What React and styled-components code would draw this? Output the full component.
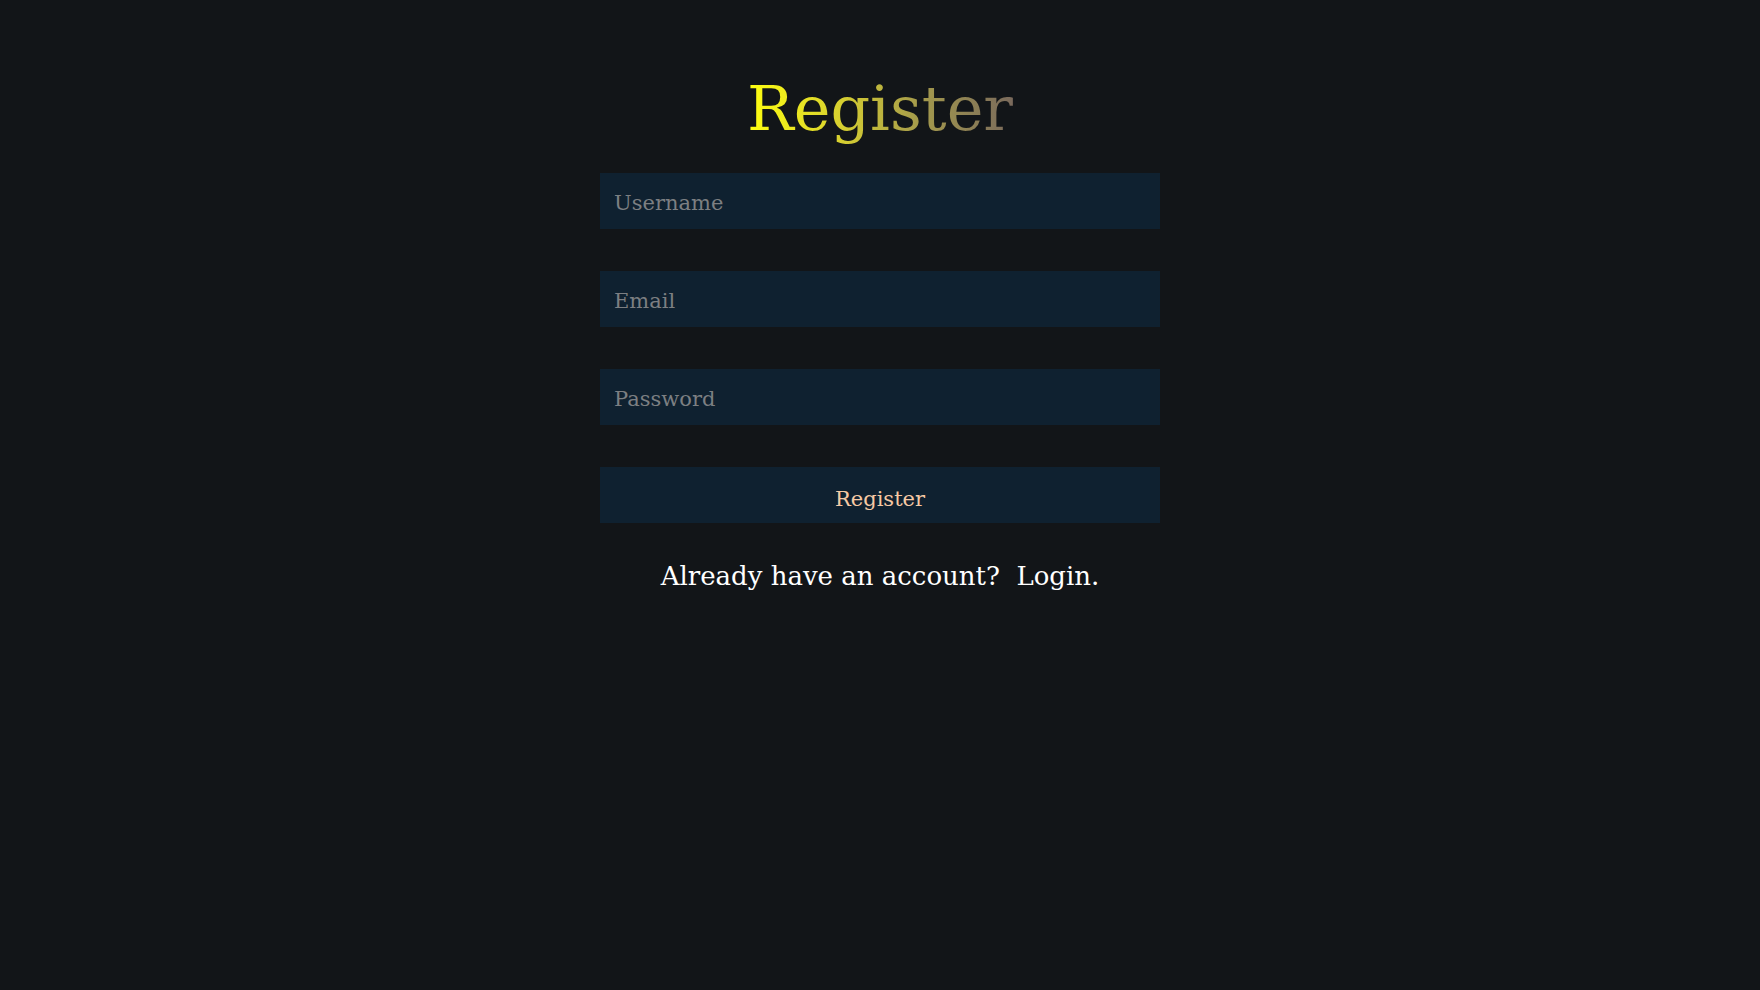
import React from "react";
import styled, { createGlobalStyle } from "styled-components";

const Global = createGlobalStyle`
  html, body { margin: 0; padding: 0; background: #121518; }
  body { font-family: "DejaVu Serif", "Liberation Serif", serif; }
  * { box-sizing: border-box; }
`;

const Page = styled.main`
  min-height: 990px;
  background: #121518;
  display: flex;
  flex-direction: column;
  align-items: center;
  padding-top: 66px;
`;

const Title = styled.h1`
  margin: 0 0 21px;
  font-family: "DejaVu Serif", serif;
  font-weight: 400;
  font-size: 62px;
  line-height: 86px;
  background: linear-gradient(90deg, #ffff10 0%, #d7d030 35%, #a49a4c 65%, #7a6a5c 100%);
  -webkit-background-clip: text;
  background-clip: text;
  color: transparent;
`;

const Form = styled.form`
  width: 560px;
  display: flex;
  flex-direction: column;
  gap: 42px;
`;

const Input = styled.input`
  height: 56px;
  width: 100%;
  border: none;
  outline: none;
  background: #0f2130;
  color: #d0d0d0;
  font-family: "DejaVu Serif", serif;
  font-size: 21px;
  padding: 4px 14px 0;
  &::placeholder { color: #7c7f82; }
`;

const Button = styled.button`
  height: 56px;
  width: 100%;
  border: none;
  background: #0f2130;
  color: #f6c9a4;
  font-family: "DejaVu Serif", serif;
  font-size: 21px;
  padding: 8px 0 0;
  cursor: pointer;
`;

const Footer = styled.p`
  margin: 38px 0 0;
  color: #ffffff;
  font-family: "DejaVu Serif", serif;
  font-size: 26px;
  white-space: pre;
`;

const Link = styled.a`
  color: #ffffff;
  text-decoration: none;
`;

export default function App() {
  return (
    <>
      <Global />
      <Page>
        <Title>Register</Title>
        <Form onSubmit={(e) => e.preventDefault()}>
          <Input type="text" placeholder="Username" />
          <Input type="email" placeholder="Email" />
          <Input type="password" placeholder="Password" />
          <Button type="submit">Register</Button>
        </Form>
        <Footer>
          Already have an account?  <Link href="#">Login.</Link>
        </Footer>
      </Page>
    </>
  );
}
